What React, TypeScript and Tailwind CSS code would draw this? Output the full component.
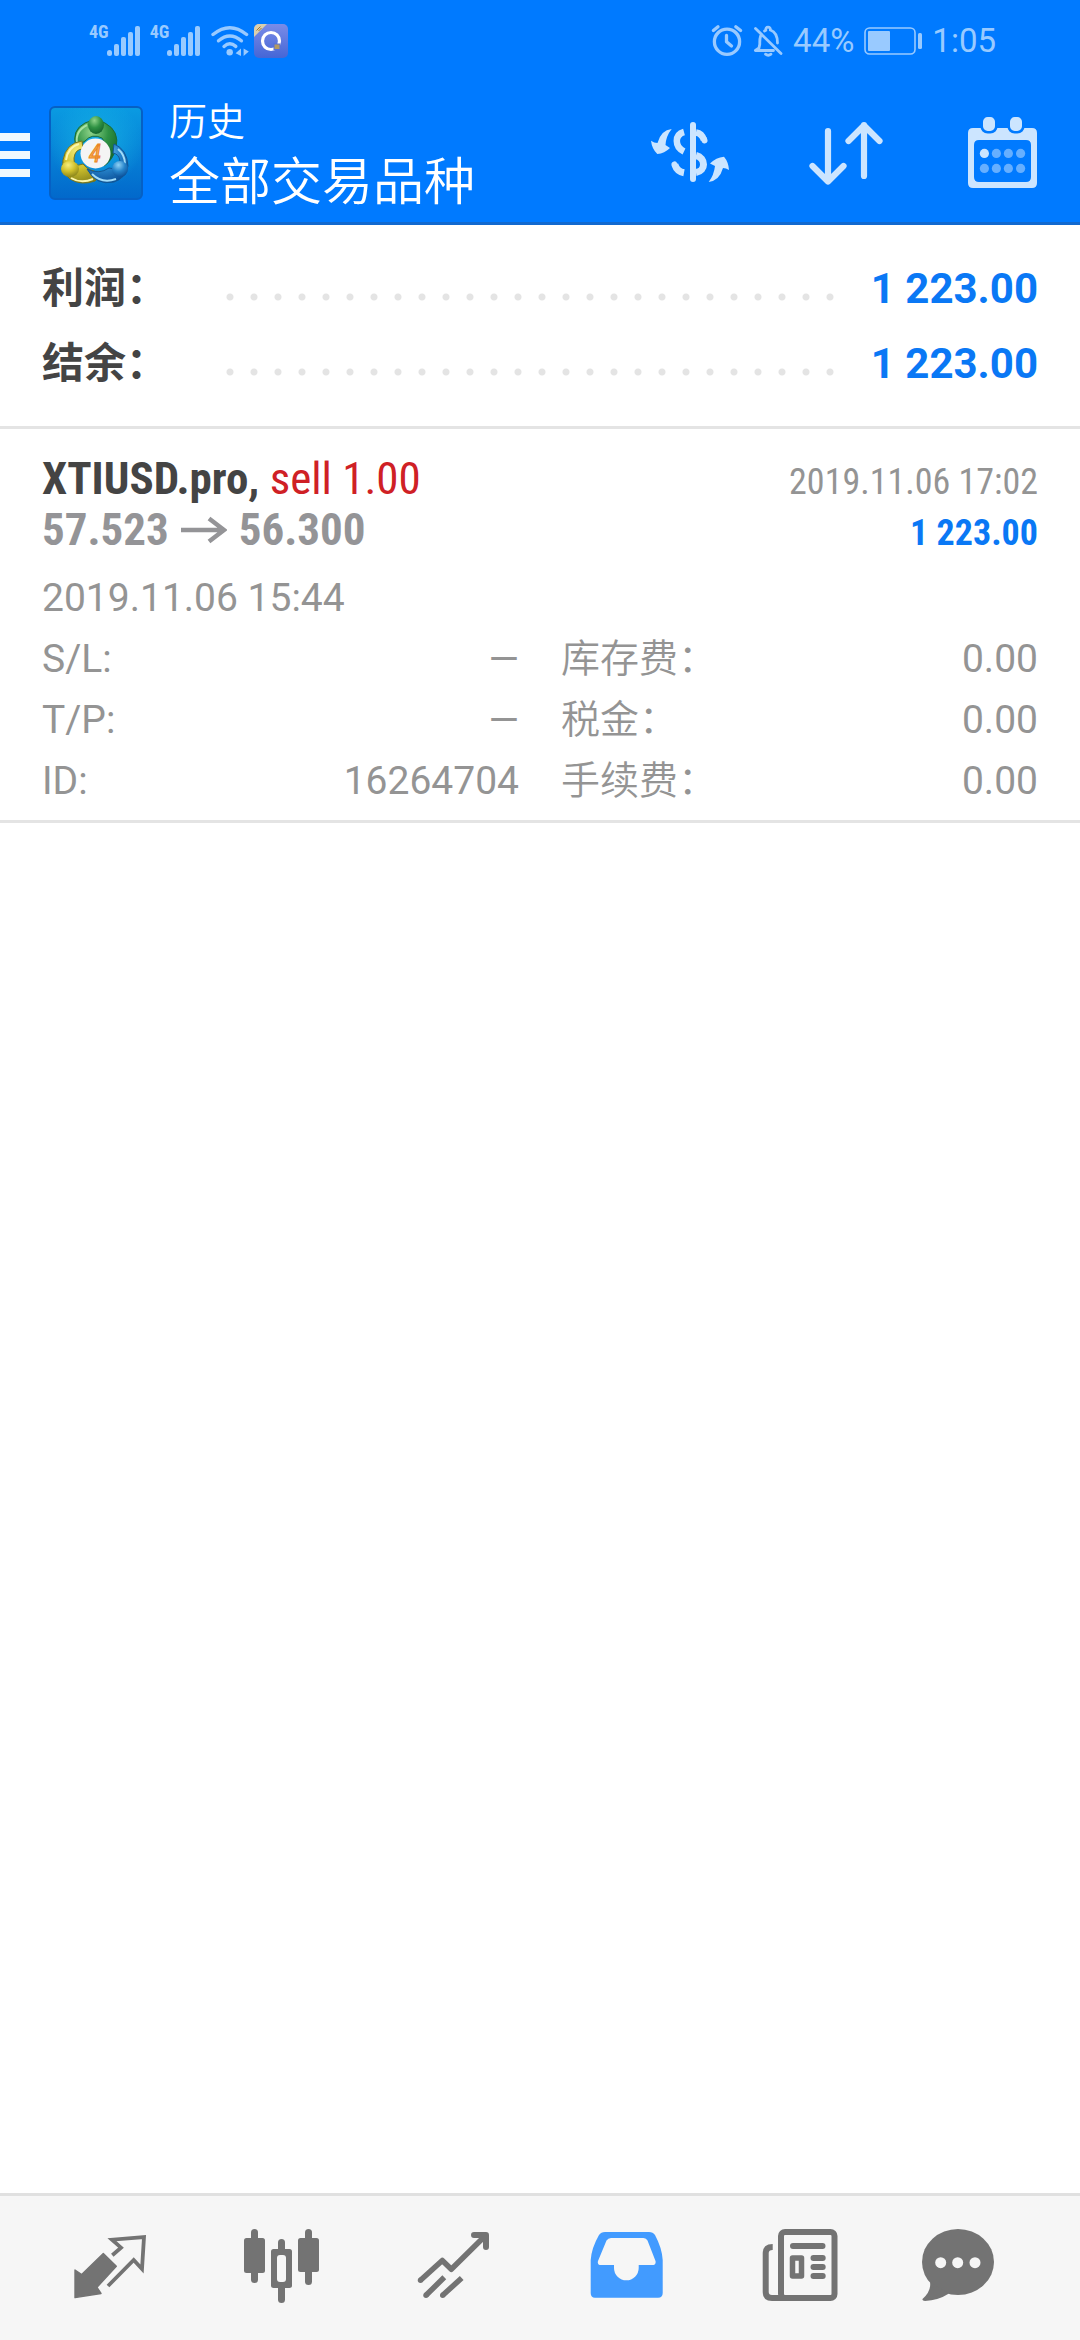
import type { ReactNode } from 'react';

const FONT = "font-[Roboto,'Noto_Sans_CJK_SC',sans-serif]";
const CONDENSED = "font-['Roboto_Condensed','Liberation_Sans_Narrow',Roboto,sans-serif]";

const summary = [
  { label: '利润：', value: '1 223.00' },
  { label: '结余：', value: '1 223.00' },
];

const deal = {
  symbol: 'XTIUSD.pro',
  side: 'sell 1.00',
  openPrice: '57.523',
  closePrice: '56.300',
  openTime: '2019.11.06 15:44',
  closeTime: '2019.11.06 17:02',
  profit: '1 223.00',
  details: [
    { label: 'S/L:', value: '—' },
    { label: '库存费：', value: '0.00' },
    { label: 'T/P:', value: '—' },
    { label: '税金：', value: '0.00' },
    { label: 'ID:', value: '16264704' },
    { label: '手续费：', value: '0.00' },
  ],
};

function Signal() {
  return (
    <div className="flex">
      <span className={`${CONDENSED} text-lg leading-4 font-bold`}>4G</span>
      <svg viewBox="0 0 33 34" className="-ml-0.5 h-[34px] w-[33px]" fill="currentColor">
        <rect x="0" y="26" width="5" height="6" rx="2.5" />
        <rect x="7" y="20" width="5" height="12" rx="2" />
        <rect x="14" y="13" width="5" height="19" rx="2" />
        <rect x="21" y="8" width="5" height="24" rx="2" />
        <rect x="28" y="2" width="5" height="30" rx="2" />
      </svg>
    </div>
  );
}

function WifiIcon() {
  return (
    <svg viewBox="0 0 40 36" className="h-9 w-10" fill="none" stroke="currentColor" strokeWidth="3.4" strokeLinecap="round">
      <path d="M3 11.5Q19.8-2.2 36.6 11.5" />
      <path d="M8.5 17.8Q19.8 8 31.4 17.8" />
      <path d="M14 23.4Q19.8 18.2 25.8 23.4" />
      <circle cx="19.7" cy="29.3" r="3.2" fill="currentColor" stroke="none" />
      <path d="M31 25.5V33L25.6 30.2ZM33.6 25.5V33L38.8 28.4Z" fill="currentColor" stroke="none" />
    </svg>
  );
}

function BrowserBadge() {
  return (
    <svg viewBox="0 0 34 34" className="h-[34px] w-[34px]">
      <defs>
        <linearGradient id="badge" x1="0" y1="0" x2="0" y2="1">
          <stop offset="0" stopColor="#7a8ce8" />
          <stop offset="1" stopColor="#4566d6" />
        </linearGradient>
        <clipPath id="badge-clip">
          <rect width="34" height="34" rx="5" />
        </clipPath>
      </defs>
      <g clipPath="url(#badge-clip)">
        <rect width="34" height="34" fill="url(#badge)" />
        <path d="M0 0H13L0 13Z" fill="#d9cfae" />
        <path d="M2.5 6.5L6.5 2.5M4.5 7L7.5 4" stroke="#a3742f" strokeWidth="1" />
      </g>
      <circle cx="17" cy="17" r="8.5" fill="none" stroke="#fff" strokeWidth="3.2" />
      <rect x="20" y="20" width="6" height="5.5" fill="#b49a62" stroke="#5670d8" strokeWidth="1" />
    </svg>
  );
}

function AlarmIcon() {
  return (
    <svg viewBox="0 0 32 36" className="h-9 w-8" fill="none" stroke="currentColor" strokeWidth="3.3" strokeLinecap="round">
      <circle cx="16" cy="18.7" r="12.6" />
      <path d="M2.4 7.5L7 3.8M24.8 3.8L29.6 7.5" />
      <path d="M15.5 12.5V18.7L20.5 23" strokeLinejoin="round" />
    </svg>
  );
}

function BellOffIcon() {
  return (
    <svg viewBox="0 0 30 36" className="h-9 w-[30px]" fill="none" stroke="currentColor" strokeWidth="2.8" strokeLinecap="round">
      <path d="M2.5 5.5L28 30.5" />
      <path d="M7.6 13Q6.6 16 6.8 21L6 25L2.4 27.5H20.5" strokeLinejoin="round" />
      <path d="M11.5 8L12.8 7.3Q12.5 4.2 15 4.2Q17.5 4.2 17.4 7Q24.5 9.5 24.5 20" />
      <path d="M12.5 31.2Q15.2 33.4 18 31.2" />
    </svg>
  );
}

function BatteryIcon() {
  return (
    <svg viewBox="0 0 58 32" className="h-8 w-[58px]" fill="none">
      <rect x="1" y="3" width="50" height="26" rx="4.5" stroke="currentColor" strokeWidth="1.6" />
      <rect x="4" y="6" width="22" height="20" rx="1" fill="currentColor" />
      <rect x="54" y="8" width="4" height="16" rx="1.5" fill="currentColor" />
    </svg>
  );
}

function StatusBar() {
  return (
    <div className="flex h-20 items-center justify-between pt-0.5 pr-[84px] pl-[89px] text-[#99caff]">
      <div className="flex items-center gap-[10px]">
        <Signal />
        <Signal />
        <div className="flex items-center gap-1">
          <WifiIcon />
          <BrowserBadge />
        </div>
      </div>
      <div className="flex items-center gap-[10px] text-[33px] leading-10">
        <AlarmIcon />
        <BellOffIcon />
        <span>44%</span>
        <BatteryIcon />
        <span>1:05</span>
      </div>
    </div>
  );
}

function AppLogo() {
  return (
    <svg viewBox="0 0 94 94" className="h-[94px] w-[94px]">
      <defs>
        <linearGradient id="logo-bg" x1="0" y1="0" x2="0" y2="1">
          <stop offset="0" stopColor="#0a9be2" />
          <stop offset="1" stopColor="#0268cb" />
        </linearGradient>
        <radialGradient id="logo-glow" cx="0.5" cy="0.4" r="0.5">
          <stop offset="0" stopColor="#18b7e6" stopOpacity="0.8" />
          <stop offset="1" stopColor="#18b7e6" stopOpacity="0" />
        </radialGradient>
        <radialGradient id="logo-green" cx="0.4" cy="0.25" r="0.8">
          <stop offset="0" stopColor="#8fd48a" />
          <stop offset="0.5" stopColor="#2f9244" />
          <stop offset="1" stopColor="#12602b" />
        </radialGradient>
        <radialGradient id="logo-yellow" cx="0.4" cy="0.25" r="0.8">
          <stop offset="0" stopColor="#f6ee7c" />
          <stop offset="0.5" stopColor="#cfc02c" />
          <stop offset="1" stopColor="#84801a" />
        </radialGradient>
        <radialGradient id="logo-blue" cx="0.4" cy="0.25" r="0.8">
          <stop offset="0" stopColor="#8fd2f5" />
          <stop offset="0.5" stopColor="#2684cb" />
          <stop offset="1" stopColor="#0a4c94" />
        </radialGradient>
      </defs>
      <rect x="1" y="1" width="92" height="92" rx="5" fill="url(#logo-bg)" />
      <rect x="1" y="1" width="92" height="92" rx="5" fill="url(#logo-glow)" stroke="#0660c4" strokeWidth="2" />
      <path d="M27 41Q22 24 36 17Q46 12 56 17Q71 25 67 42Q64 54 55 60Q62 42 53 32Q43 27 36 35Z" fill="url(#logo-green)" stroke="#1c6b36" strokeWidth="1" />
      <path d="M28 37Q26 25 38 19" fill="none" stroke="#a9e2a2" strokeWidth="2" />
      <path d="M33 35Q17 37 14 54Q12 66 21 73Q32 80 46 75Q52 71 52 66Q40 66 34 58Q24 62 25 52Q26 43 34 43Z" fill="url(#logo-yellow)" stroke="#77741d" strokeWidth="1" />
      <path d="M30 38Q19 41 17 54M22 72Q32 78 44 73" fill="none" stroke="#fbf6ac" strokeWidth="2" />
      <path d="M65 38Q78 43 79 60Q77 72 65 76Q47 80 38 63Q50 69 60 62Q70 65 71 55Q70 48 64 47Z" fill="url(#logo-blue)" stroke="#115796" strokeWidth="1" />
      <path d="M69 43Q76 49 76 58M43 68Q53 78 67 73" fill="none" stroke="#a2dcf8" strokeWidth="2" />
      <ellipse cx="47" cy="19" rx="8" ry="9" fill="url(#logo-green)" />
      <ellipse cx="21" cy="63" rx="9" ry="8" fill="url(#logo-yellow)" />
      <ellipse cx="71" cy="63" rx="8" ry="8" fill="url(#logo-blue)" />
      <circle cx="46.5" cy="47.5" r="15" fill="#f4f4f4" />
      <text x="46" y="56" textAnchor="middle" fontSize="25" fontStyle="italic" fill="#fbb355" stroke="#ea8524" strokeWidth="1" className={CONDENSED}>
        4
      </text>
    </svg>
  );
}

function ActionIcon({ label, children }: { label: string; children: ReactNode }) {
  return (
    <button type="button" aria-label={label} className="text-[#cce5ff]">
      <svg viewBox="0 0 96 96" className="h-24 w-24" fill="none">
        {children}
      </svg>
    </button>
  );
}

function Header() {
  return (
    <header className="border-b-[3px] border-[#1269cf] bg-[#007aff] text-white">
      <StatusBar />
      <div className="flex h-[142px] items-center pt-1 pr-[30px]">
        <button type="button" aria-label="Menu" className="mr-[19px] flex w-[30px] flex-col gap-[10px] pt-1">
          <span className="h-2 bg-[#f0f8ff]" />
          <span className="h-2 bg-[#f0f8ff]" />
          <span className="h-2 bg-[#f0f8ff]" />
        </button>
        <AppLogo />
        <div className="ml-[26px] flex-1 pt-1 font-[350]">
          <p className="text-[38px] leading-[56px]">历史</p>
          <h1 className="text-[51px] leading-[66px]">全部交易品种</h1>
        </div>
        <div className="flex gap-[60px]">
          <ActionIcon label="Symbols">
            <path d="M51 20V74" stroke="currentColor" strokeWidth="6" strokeLinecap="round" />
            <path d="M42 27Q34.8 29 34.8 36Q34.8 43 42 46.5M54 27.5Q60 28.5 62 35" stroke="currentColor" strokeWidth="6.5" />
            <path d="M62 34L62.5 35.5M32.5 59.5L33 60.5" stroke="currentColor" strokeWidth="6" strokeLinecap="round" />
            <path d="M32.8 59.5Q35 66.5 42 67.8M54 50.5C64 53 64 66 54 67.5" stroke="currentColor" strokeWidth="7" />
            <path d="M29.7 24Q19 25 15.5 38Q12 38 9 35.7Q10 44 15.3 49Q22.5 48.5 28 43L23.5 40Q24 31 29.7 24Z" fill="currentColor" />
            <path d="M66.7 77Q77.5 75.5 81 63Q84 63 87 65Q86.5 57 82 51.7Q74 52.5 68 58.5L73 61Q72 70 66.7 77Z" fill="currentColor" />
          </ActionIcon>
          <ActionIcon label="Sort">
            <path d="M30 26V76M14.5 61L30 76.5L45.5 61M66 71V20M50.5 36L66 20.5L81.5 36" stroke="currentColor" strokeWidth="6.2" strokeLinecap="round" strokeLinejoin="round" />
          </ActionIcon>
          <ActionIcon label="Period">
            <path fillRule="evenodd" d="M19 23H78Q83 23 83 28V78Q83 83 78 83H19Q14 83 14 78V28Q14 23 19 23ZM25 35Q20 35 20 40V72Q20 77 25 77H72Q77 77 77 72V40Q77 35 72 35Z" fill="currentColor" />
            <rect x="27.7" y="10.7" width="14.6" height="16.6" rx="6" fill="currentColor" stroke="#007aff" strokeWidth="2.6" />
            <rect x="54.7" y="10.7" width="14.6" height="16.6" rx="6" fill="currentColor" stroke="#007aff" strokeWidth="2.6" />
            <circle cx="30.4" cy="48.4" r="4.6" fill="currentColor" />
            <g fill="#66afff">
              <circle cx="42.4" cy="48.4" r="4.6" />
              <circle cx="54.4" cy="48.4" r="4.6" />
              <circle cx="66.6" cy="48.4" r="4.6" />
              <circle cx="30.4" cy="63.4" r="4.6" />
              <circle cx="42.4" cy="63.4" r="4.6" />
              <circle cx="54.4" cy="63.4" r="4.6" />
              <circle cx="66.6" cy="63.4" r="4.6" />
            </g>
          </ActionIcon>
        </div>
      </div>
    </header>
  );
}

function Summary() {
  return (
    <section className="border-b-[3px] border-[#e4e4e4] px-[42px] pt-[26px] pb-[25px] text-[42px] leading-[75px] font-bold">
      {summary.map((row) => (
        <div key={row.label} className="flex items-center">
          <span className="w-44 text-[#444444]">{row.label}</span>
          <span className="mt-4 mr-7 h-6 flex-1 bg-[radial-gradient(circle,#e4e4e4_3px,transparent_4px)] bg-[length:24px_24px]" />
          <span className="text-[#0a78f5]">{row.value}</span>
        </div>
      ))}
    </section>
  );
}

function Deal() {
  return (
    <article className="border-b-[3px] border-[#e4e4e4] px-[42px] pt-[26px] pb-2 text-[#949494]">
      <div className={`${CONDENSED} text-[36px] leading-[48px]`}>
        <div className="flex items-baseline justify-between">
          <h2 className="text-[45px] text-[#cf2025]">
            <strong className="text-[#444444]">{deal.symbol},</strong> {deal.side}
          </h2>
          <time>{deal.closeTime}</time>
        </div>
        <div className="flex items-baseline justify-between font-bold">
          <p className="flex items-center gap-3 text-[45px] text-[#949497]">
            {deal.openPrice}
            <svg viewBox="0 0 46 28" className="h-7 w-[46px]" fill="none" stroke="currentColor" strokeWidth="4.5">
              <path d="M0 14H43M28 2.5L43 14L28 25.5" />
            </svg>
            {deal.closePrice}
          </p>
          <span className="text-[#0a78f5]">{deal.profit}</span>
        </div>
      </div>
      <div className="mt-[11px] text-[39px] leading-[61px]">
        <time className="block">{deal.openTime}</time>
        <dl className="grid grid-cols-2 gap-x-[42px]">
          {deal.details.map((item) => (
            <div key={item.label} className="group flex justify-between">
              <dt className="group-even:font-[350]">{item.label}</dt>
              <dd>{item.value}</dd>
            </div>
          ))}
        </dl>
      </div>
    </article>
  );
}

function Tab({ label, active, children }: { label: string; active?: boolean; children: ReactNode }) {
  return (
    <button
      type="button"
      aria-label={label}
      className={`flex flex-1 justify-center py-6 ${active ? 'text-[#429bff]' : 'text-[#737373]'}`}
    >
      <svg viewBox="0 0 96 96" className="h-24 w-24" fill="none">
        {children}
      </svg>
    </button>
  );
}

function BottomNav() {
  return (
    <nav className="mt-auto flex border-t-[3px] border-[#e0e0e0] bg-[#f6f6f6] px-6">
      <Tab label="Quotes">
        <path d="M13 50L19.7 54.5L41.3 33.5L54.3 46.3L35 67.3L39 73.5L13 77.6Z" fill="currentColor" stroke="currentColor" strokeWidth="1.4" strokeLinejoin="round" />
        <path d="M50.3 35.3L59 27.7L50 19.7L82 17L80 49L71.7 40L46 66" stroke="currentColor" strokeWidth="3.8" />
      </Tab>
      <Tab label="Charts">
        <g fill="currentColor">
          <rect x="17" y="9" width="7" height="54" rx="3.5" />
          <rect x="10" y="18" width="21" height="35" rx="2.5" />
          <rect x="44" y="19" width="7" height="64" rx="3.5" />
          <rect x="37" y="29" width="21" height="39" rx="2.5" />
          <rect x="71" y="9" width="7" height="56" rx="3.5" />
          <rect x="64" y="18" width="21" height="34" rx="2.5" />
        </g>
        <rect x="43" y="35" width="9" height="27" rx="3" fill="#f6f6f6" />
      </Tab>
      <Tab label="Trade">
        <g stroke="currentColor" strokeWidth="5.5">
          <path d="M14.5 60.3L36.3 40.5L45.3 49.3L79 16" strokeLinejoin="round" />
          <path d="M68 15H80V27" strokeWidth="6" strokeLinecap="round" strokeLinejoin="round" />
          <path d="M20 75.3L38.3 57.3M36.7 75.3L55.7 58" />
        </g>
        <circle cx="14.5" cy="60.3" r="2.7" fill="currentColor" />
        <circle cx="20" cy="75.3" r="2.7" fill="currentColor" />
        <circle cx="36.7" cy="75.3" r="2.7" fill="currentColor" />
      </Tab>
      <Tab label="History" active>
        <path
          fillRule="evenodd"
          fill="currentColor"
          d="M27 12H71Q75 12 77 15Q84 28 84.7 40V73Q84.7 77.7 80 77.7H17Q12.7 77.7 12.7 73V40Q13.5 28 21 15Q23 12 27 12ZM33 18H65.5Q68.3 18 69.5 20.5L77.5 41Q78.3 45 74 45H60.7V48A12.3 12.3 0 0 1 36 48V45H23Q19 45 20 41L28.5 20.5Q30 18 33 18Z"
        />
      </Tab>
      <Tab label="News">
        <rect x="31" y="12" width="53.5" height="66" rx="4" stroke="currentColor" strokeWidth="6" />
        <path d="M22.7 27Q15.7 27 15.7 33V72Q15.7 78 22 78H35" stroke="currentColor" strokeWidth="6" />
        <path d="M43 26H72.5M63.5 38H72.7M63.5 47H72.7M63.5 56H72.7" stroke="currentColor" strokeWidth="6" strokeLinecap="round" />
        <rect x="42.5" y="38" width="9" height="18" stroke="currentColor" strokeWidth="5.5" strokeLinejoin="round" />
      </Tab>
      <Tab label="Messages">
        <ellipse cx="36" cy="42" rx="36" ry="33" fill="currentColor" />
        <path d="M8 62Q9.500 71 .5 79Q0 81 3 81Q16 80.5 27 73.5Z" fill="currentColor" />
        <g fill="#f6f6f6">
          <circle cx="18.7" cy="42.7" r="5.5" />
          <circle cx="35.7" cy="42.7" r="5.5" />
          <circle cx="53" cy="42.7" r="5.5" />
        </g>
      </Tab>
    </nav>
  );
}

export default function App() {
  return (
    <div className={`${FONT} flex min-h-screen flex-col bg-white`}>
      <Header />
      <main>
        <Summary />
        <Deal />
      </main>
      <BottomNav />
    </div>
  );
}
